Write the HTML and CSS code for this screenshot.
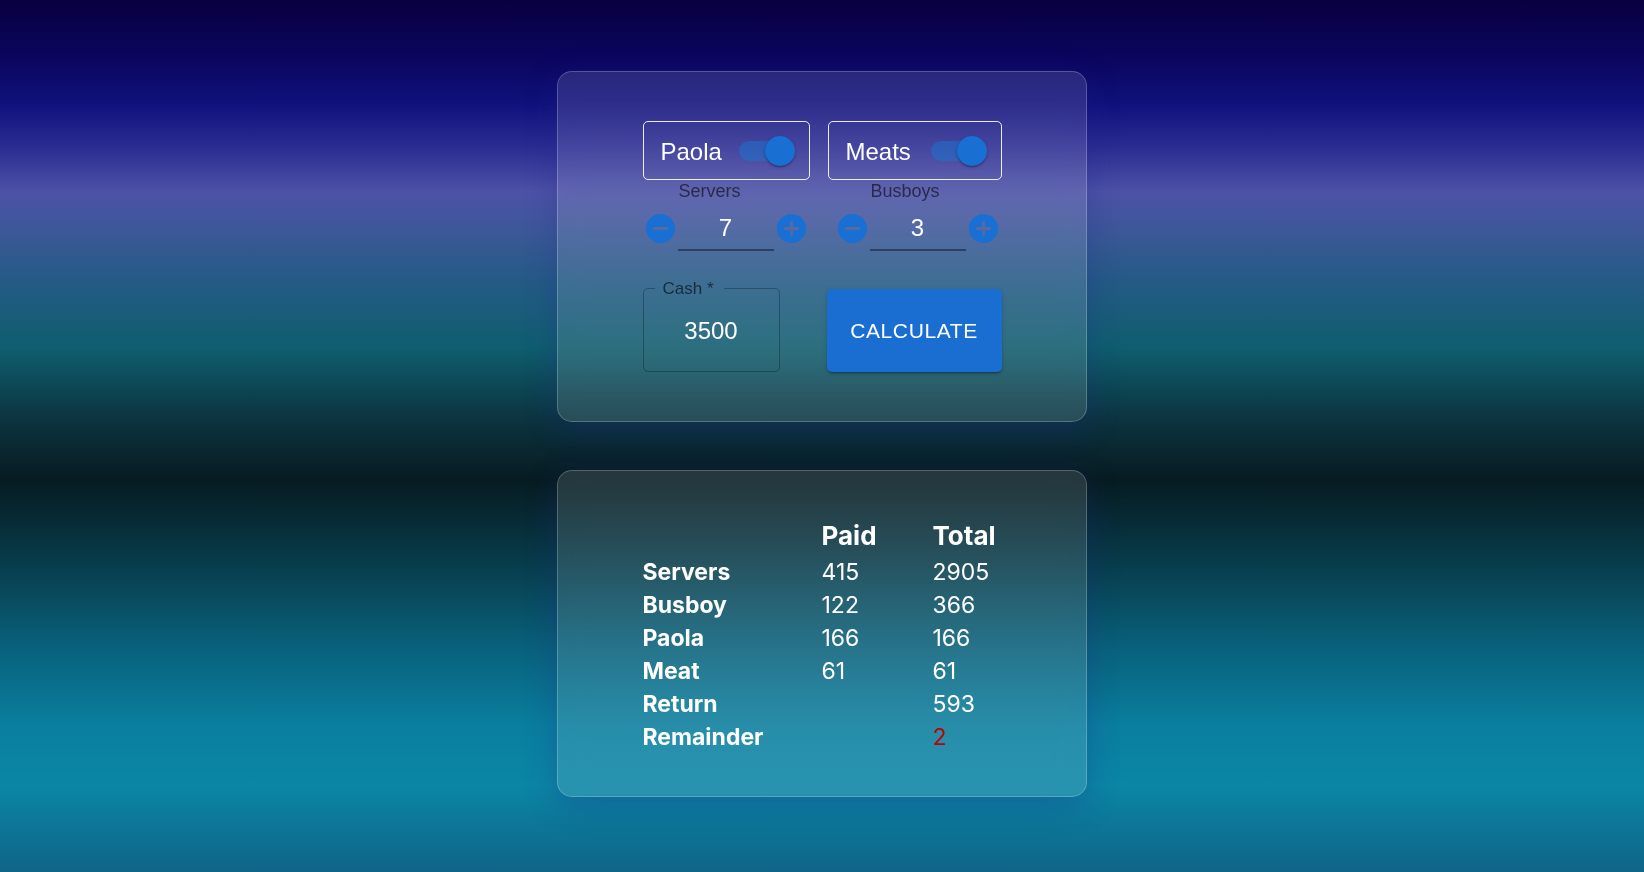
FILE: index.html
```html
<!DOCTYPE html>
<html lang="en">
<head>
    <meta charset="UTF-8">
    <meta name="viewport" content="width=device-width, initial-scale=1.0">
    <title>Tip Calculator</title>
    <link rel="stylesheet" href="styles.css">
</head>
<body>
    <main class="page">
        <!-- Entrada -->
        <section class="card">
            <div class="card-inner">
                <div class="staff-grid">
                    <div class="staff-col">
                        <label class="toggle-box">
                            <span class="toggle-label">Paola</span>
                            <span class="switch"><span class="switch-track"></span><span class="switch-thumb"></span></span>
                        </label>
                        <div class="counter">
                            <div class="counter-label">Servers</div>
                            <div class="stepper">
                                <button class="step-btn" type="button">
                                    <svg viewBox="0 0 24 24"><path d="M12 2C6.48 2 2 6.48 2 12s4.48 10 10 10 10-4.48 10-10S17.52 2 12 2zm5 11H7v-2h10v2z"/></svg>
                                </button>
                                <div class="step-value">7</div>
                                <button class="step-btn" type="button">
                                    <svg viewBox="0 0 24 24"><path d="M12 2C6.48 2 2 6.48 2 12s4.48 10 10 10 10-4.48 10-10S17.52 2 12 2zm5 11h-4v4h-2v-4H7v-2h4V7h2v4h4v2z"/></svg>
                                </button>
                            </div>
                        </div>
                    </div>
                    <div class="staff-col">
                        <label class="toggle-box">
                            <span class="toggle-label">Meats</span>
                            <span class="switch"><span class="switch-track"></span><span class="switch-thumb"></span></span>
                        </label>
                        <div class="counter">
                            <div class="counter-label">Busboys</div>
                            <div class="stepper">
                                <button class="step-btn" type="button">
                                    <svg viewBox="0 0 24 24"><path d="M12 2C6.48 2 2 6.48 2 12s4.48 10 10 10 10-4.48 10-10S17.52 2 12 2zm5 11H7v-2h10v2z"/></svg>
                                </button>
                                <div class="step-value">3</div>
                                <button class="step-btn" type="button">
                                    <svg viewBox="0 0 24 24"><path d="M12 2C6.48 2 2 6.48 2 12s4.48 10 10 10 10-4.48 10-10S17.52 2 12 2zm5 11h-4v4h-2v-4H7v-2h4V7h2v4h4v2z"/></svg>
                                </button>
                            </div>
                        </div>
                    </div>
                </div>

                <div class="action-row">
                    <fieldset class="cash-field">
                        <legend>Cash *</legend>
                        <div class="cash-value">3500</div>
                    </fieldset>
                    <button class="calc-btn" type="button">Calculate</button>
                </div>
            </div>
        </section>

        <!-- Resultado -->
        <section class="card card-results">
            <div class="card-inner">
                <div class="results">
                    <div class="results-head"></div>
                    <div class="results-head">Paid</div>
                    <div class="results-head">Total</div>

                    <div class="results-name">Servers</div>
                    <div>415</div>
                    <div>2905</div>

                    <div class="results-name">Busboy</div>
                    <div>122</div>
                    <div>366</div>

                    <div class="results-name">Paola</div>
                    <div>166</div>
                    <div>166</div>

                    <div class="results-name">Meat</div>
                    <div>61</div>
                    <div>61</div>

                    <div class="results-name">Return</div>
                    <div></div>
                    <div>593</div>

                    <div class="results-name">Remainder</div>
                    <div></div>
                    <div class="remainder">2</div>
                </div>
            </div>
        </section>
    </main>
</body>
</html>
```

FILE: styles.css
```css
html, body {
    margin: 0;
    min-height: 100vh;
}
body {
    font-family: "Liberation Sans", Arial, sans-serif;
    color: #fff;
    background: linear-gradient(180deg,
        #08003f 0%,
        #0b0660 7%,
        #10117c 12%,
        #2c2d92 17%,
        #4d52a7 22%,
        #3a5896 27%,
        #255a86 32%,
        #0f5d6e 40%,
        #0c3440 48%,
        #071b21 55%,
        #083a48 64%,
        #09607a 74%,
        #0a7e9e 83%,
        #0b86a5 90%,
        #0f6488 100%);
}

.page {
    display: flex;
    flex-direction: column;
    align-items: center;
    gap: 48px;
    padding-top: 71px;
}

.card {
    box-sizing: border-box;
    width: 530px;
    padding: 49px 0 49px;
    border-radius: 15px;
    border: 1px solid rgba(255, 255, 255, 0.22);
    background: rgba(255, 255, 255, 0.12);
    backdrop-filter: blur(12px);
    box-shadow: 0 8px 32px rgba(31, 38, 135, 0.3);
}
.card-inner {
    width: 359px;
    margin: 0 auto;
}

/* toggles + contadores */
.staff-grid {
    display: grid;
    grid-template-columns: 167px 174px;
    justify-content: space-between;
}
.staff-col {
    display: flex;
    flex-direction: column;
}
.toggle-box {
    display: flex;
    align-items: center;
    justify-content: space-between;
    height: 59px;
    box-sizing: border-box;
    padding: 0 14px 0 17px;
    border: 1px solid rgba(255, 255, 255, 0.9);
    border-radius: 5px;
}
.toggle-label {
    font-size: 24px;
    margin-top: 3px;
}
.switch {
    position: relative;
    width: 56px;
    height: 30px;
}
.switch-track {
    position: absolute;
    left: 0;
    top: 5px;
    width: 52px;
    height: 20px;
    border-radius: 10px;
    background: rgba(25, 118, 210, 0.5);
}
.switch-thumb {
    position: absolute;
    right: 0;
    top: 0;
    width: 30px;
    height: 30px;
    border-radius: 50%;
    background: #1a6fd3;
    box-shadow: 0 2px 2px -1px rgba(0, 0, 0, 0.25), 0 1px 2px rgba(0, 0, 0, 0.18), 0 1px 4px rgba(0, 0, 0, 0.12);
}

.counter {
    align-self: flex-end;
    width: 167px;
}
.counter-label {
    margin-top: 1px;
    padding-left: 36px;
    font-size: 18px;
    line-height: 21px;
    color: rgba(0, 0, 0, 0.58);
}
.stepper {
    display: flex;
    align-items: flex-start;
    margin-top: 8px;
}
.step-btn {
    width: 35px;
    height: 36px;
    padding: 0;
    border: 0;
    background: none;
    display: flex;
    align-items: center;
    justify-content: center;
}
.step-btn svg {
    width: 35px;
    height: 35px;
    fill: #1a6fd3;
}
.step-value {
    width: 96px;
    height: 41px;
    box-sizing: border-box;
    padding-top: 4px;
    text-align: center;
    font-size: 24px;
    line-height: 28px;
    border-bottom: 2px solid rgba(0, 0, 0, 0.4);
}

/* cash + botão */
.action-row {
    display: flex;
    justify-content: space-between;
    align-items: flex-end;
    margin-top: 30px;
}
.cash-field {
    box-sizing: border-box;
    width: 137px;
    margin: 0;
    padding: 0 11px;
    border: 1px solid rgba(0, 0, 0, 0.28);
    border-radius: 5px;
    min-inline-size: 0;
}
.cash-field legend {
    padding: 0 10px 0 8px;
    font-size: 17px;
    line-height: 15px;
    color: rgba(0, 0, 0, 0.6);
}
.cash-value {
    height: 75px;
    line-height: 70px;
    text-align: center;
    font-size: 24px;
}
.calc-btn {
    width: 175px;
    height: 83px;
    border: 0;
    border-radius: 5px;
    background: #1a6dd1;
    color: #fff;
    font-family: "Liberation Sans", Arial, sans-serif;
    font-size: 21px;
    letter-spacing: 0.6px;
    text-transform: uppercase;
    box-shadow: 0 3px 1px -2px rgba(0, 0, 0, 0.2), 0 2px 2px rgba(0, 0, 0, 0.14), 0 1px 5px rgba(0, 0, 0, 0.12);
}

/* tabela de resultados */
.card-results {
    padding: 46px 0 42px;
}
.results {
    display: grid;
    grid-template-columns: 179px 111px auto;
    font-family: Inter, "Noto Sans", sans-serif;
    font-size: 23px;
    line-height: 33px;
}
.results-head {
    padding-bottom: 2px;
    font-size: 26px;
    font-weight: 700;
    line-height: 37px;
}
.results-name {
    font-weight: 700;
}
.remainder {
    color: #c00000;
}
```
